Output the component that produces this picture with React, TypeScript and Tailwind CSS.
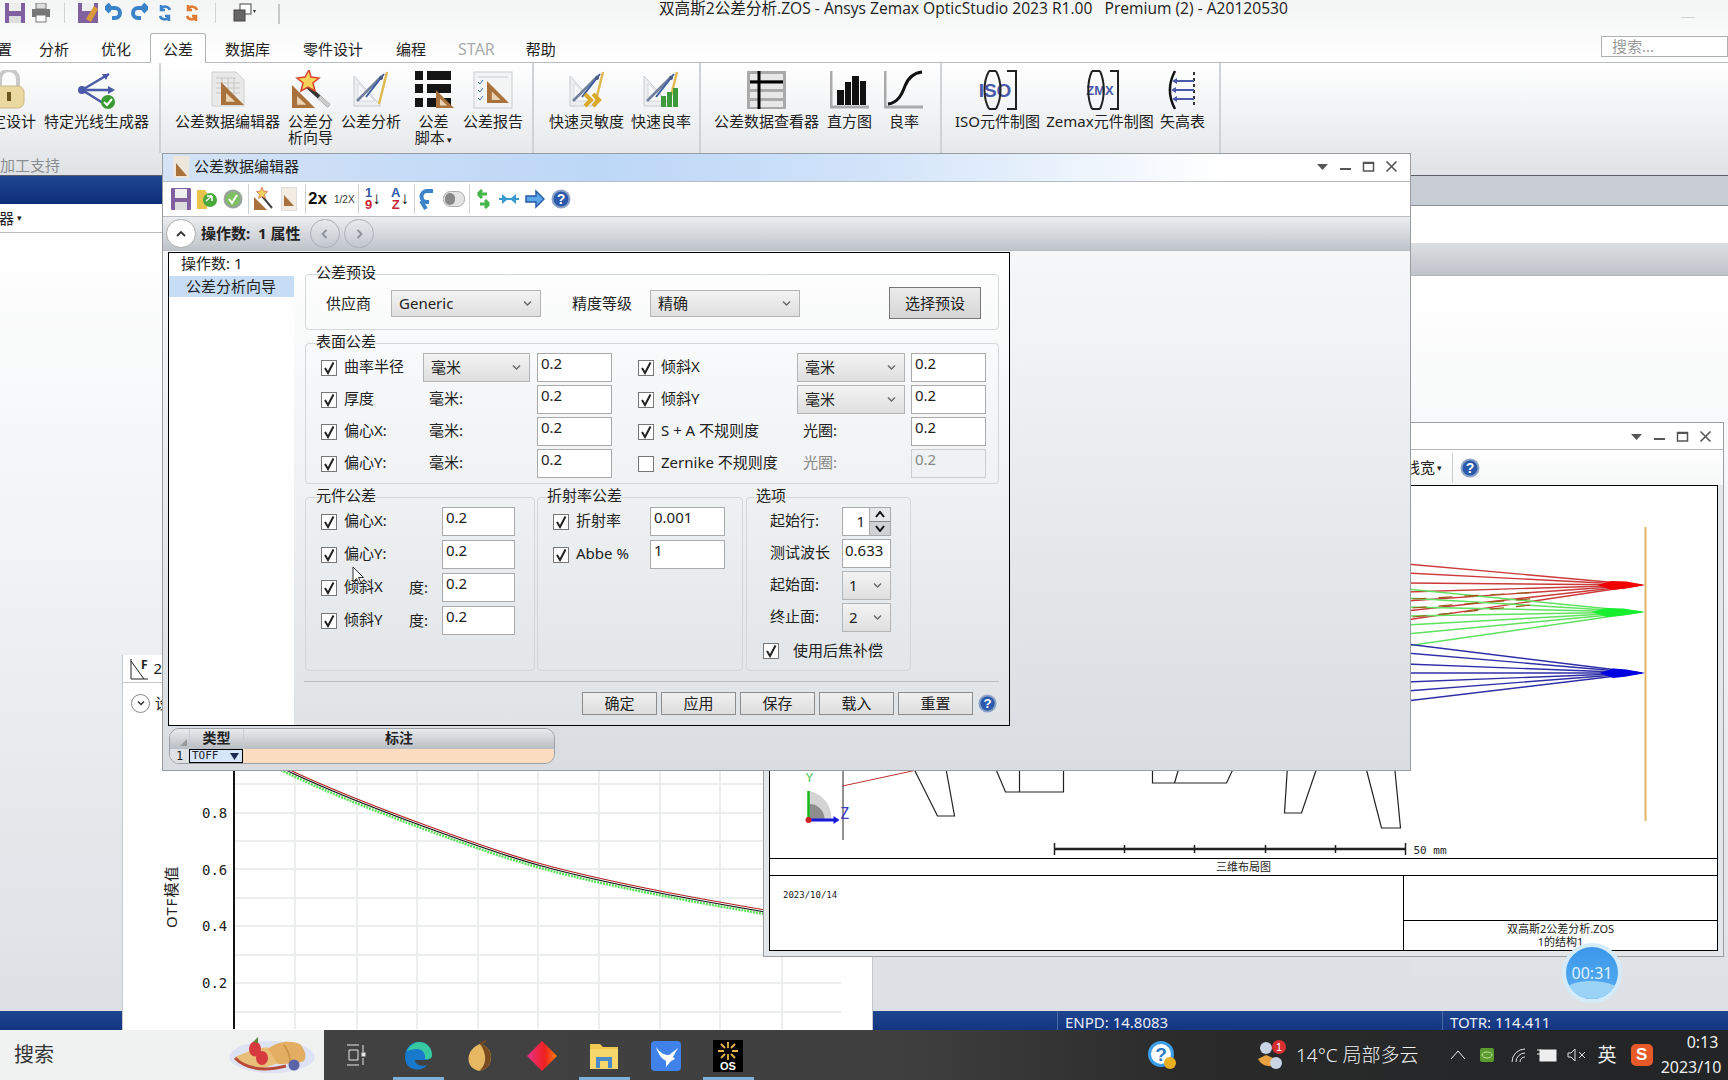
import React from "react";

const Tri = ({ x, y, s, o }: { x: number; y: number; s: number; o?: string }) => (
  <g>
    <path d={`M${x} ${y}L${x + s} ${y + s}H${x}Z`} fill={o ?? "#a9713c"} />
    <path d={`M${x + s * 0.22} ${y + s * 0.48}L${x + s * 0.62} ${y + s * 0.86}H${x + s * 0.22}Z`} fill="#e8d3b4" />
  </g>
);
const Sv = ({ w = 40, h = 40, vb = "0 0 40 40", children }: { w?: number; h?: number; vb?: string; children: React.ReactNode }) => (
  <svg width={w} height={h} viewBox={vb} className="shrink-0">{children}</svg>
);
const Compass = () => (
  <g>
    <path d="M3 6L30 36H3Z" fill="#eceef0" stroke="#c8cbd0" />
    <path d="M7 13L24 31H7Z" fill="#f8f9f9" stroke="#d4d6da" />
    <path d="M6 31L31 6" stroke="#6f7f9c" strokeWidth="2.500" />
    <path d="M15 27L33 4" stroke="#3d5fa0" strokeWidth="2" />
    <path d="M28 34L36 2" stroke="#e0b850" strokeWidth="2.500" />
    <circle cx="30" cy="8" r="2" fill="#4a5a80" />
  </g>
);
const icons: Record<string, React.ReactNode> = {
  lock: (
    <Sv>
      <path d="M6 17V9a9 9 0 0 1 18 0v8" fill="none" stroke="#c9c9c9" strokeWidth="4" />
      <rect x="0" y="16" width="30" height="22" rx="6" fill="#e9d9a0" stroke="#c9b884" />
      <rect x="13" y="22" width="4" height="9" fill="#6b5520" />
    </Sv>
  ),
  gen: (
    <Sv>
      <circle cx="5" cy="20" r="4" fill="#4a5aa8" />
      <path d="M5 20L32 4M5 20H36M5 20L26 33" stroke="#4a5aa8" strokeWidth="2.500" />
      <path d="M32 4l-7 0 4 6zM38 20l-7-4v8z" fill="#4a5aa8" />
      <circle cx="31" cy="32" r="7" fill="#3a9a32" />
      <path d="M27 32l3 3 5-6" stroke="#fff" strokeWidth="2" fill="none" />
    </Sv>
  ),
  sheet: (
    <Sv>
      <path d="M4 2H28L36 10V36H4Z" fill="#e8e9e8" stroke="#cfcfcf" />
      <path d="M8 8H28M8 13H32M8 18H32M8 23H32M14 8V30M20 8V30M26 8V30" stroke="#c8c8c4" />
      <Tri x={13} y={12} s={23} />
    </Sv>
  ),
  wand: (
    <Sv>
      <path d="M16 16L38 36" stroke="#333" strokeWidth="4" />
      <path d="M38 36L28 27" stroke="#ccc" strokeWidth="4" />
      <path d="M18 0l2 7 8 1-6 5 2 8-7-4-7 4 2-8-6-5 8-1z" fill="#f7d35a" stroke="#d4452e" strokeWidth="1.500" />
      <Tri x={1} y={15} s={23} />
    </Sv>
  ),
  comp: <Sv><Compass /></Sv>,
  script: (
    <Sv>
      <g fill="#151515">
        <rect x="1" y="1" width="8" height="9" /><rect x="13" y="1" width="24" height="9" />
        <rect x="1" y="14" width="8" height="9" /><rect x="13" y="14" width="24" height="9" />
        <rect x="1" y="28" width="8" height="9" /><rect x="13" y="28" width="24" height="9" />
      </g>
      <Tri x={22} y={20} s={18} />
    </Sv>
  ),
  report: (
    <Sv>
      <rect x="1" y="2" width="38" height="36" fill="#f3f5f5" stroke="#c9ccd0" />
      <path d="M5 7H35" stroke="#c9ccd0" />
      <path d="M5 12l2 2 3-4M5 20l2 2 3-4M5 28l2 2 3-4" stroke="#4d7fc0" fill="none" />
      <Tri x={14} y={11} s={22} />
    </Sv>
  ),
  sens: (
    <Sv>
      <Compass />
      <path d="M18 24l6 6-6 6M26 24l6 6-6 6" stroke="#d9a92a" strokeWidth="4" fill="none" />
    </Sv>
  ),
  yield: (
    <Sv>
      <Compass />
      <rect x="20" y="26" width="5" height="11" fill="#3d9a3a" />
      <rect x="26" y="22" width="5" height="15" fill="#3d9a3a" />
      <rect x="32" y="18" width="5" height="19" fill="#3d9a3a" />
    </Sv>
  ),
  view: (
    <Sv>
      <rect x="0" y="1" width="39" height="38" fill="#a9aaa9" />
      <g fill="#e6e7e6">
        <rect x="3" y="4" width="33" height="6" /><rect x="3" y="13" width="33" height="6" />
        <rect x="3" y="22" width="33" height="6" /><rect x="3" y="31" width="33" height="6" />
      </g>
      <path d="M12 1V39" stroke="#000" strokeWidth="3" />
      <path d="M3 12H36" stroke="#000" strokeWidth="3" />
    </Sv>
  ),
  hist: (
    <Sv>
      <path d="M1 1V37H39" stroke="#aaa" strokeWidth="3" fill="none" />
      <g fill="#111">
        <rect x="7" y="20" width="7" height="15" /><rect x="15" y="12" width="6" height="23" />
        <rect x="22" y="6" width="7" height="29" /><rect x="30" y="11" width="6" height="24" />
      </g>
    </Sv>
  ),
  curve: (
    <Sv>
      <path d="M1 1V37H39" stroke="#aaa" strokeWidth="3" fill="none" />
      <path d="M4 34C14 33 18 24 21 16S30 3 38 2" stroke="#111" strokeWidth="3" fill="none" />
    </Sv>
  ),
  iso: (
    <Sv w={40} h={40}>
      <text x="17" y="27" textAnchor="middle" fontSize="19" fontWeight="700" fill="#4a58a8" fontFamily="Liberation Sans">ISO</text>
      <g fill="none" stroke="#222" strokeWidth="2">
        <path d="M11 1C5 12 5 28 11 39M18 1C24 12 24 28 18 39M11 1H18M11 39H18" />
        <path d="M29 1H38V39H29" />
      </g>
    </Sv>
  ),
  zmx: (
    <Sv w={40} h={40}>
      <text x="20" y="25" textAnchor="middle" fontSize="13" fontWeight="700" fill="#4a58a8" fontFamily="Liberation Sans">ZMX</text>
      <g fill="none" stroke="#222" strokeWidth="2">
        <path d="M12 1C7 12 7 28 12 39M20 1C25 12 25 28 20 39M12 1H20M12 39H20" />
        <path d="M30 1H38V39H30" />
      </g>
    </Sv>
  ),
  sag: (
    <Sv w={30} h={40} vb="0 0 30 40">
      <path d="M7 1C0 14 0 26 7 39" stroke="#111" strokeWidth="2.500" fill="none" />
      <path d="M26 2V38" stroke="#333" strokeWidth="2" strokeDasharray="3 3" />
      <path d="M6 11H26M5 20H26M6 29H26" stroke="#4a5aa8" strokeWidth="2" />
      <path d="M4 11l5-3v6zM3 20l5-3v6zM4 29l5-3v6z" fill="#4a5aa8" />
    </Sv>
  ),
};

const Item = ({ w, icon, label }: { w: number; icon: string; label: React.ReactNode }) => (
  <div className="flex flex-col items-center shrink-0 pt-[7px]" style={{ width: w }}>
    <div className="h-10 flex justify-center">{icons[icon]}</div>
    <div className="mt-[3px] text-[15px] leading-4 text-center whitespace-nowrap text-[#222]">{label}</div>
  </div>
);

const Group = ({ w, pl, gap, children }: { w: number; pl: number; gap: number; children: React.ReactNode }) => (
  <div className="flex h-[90px] shrink-0 border-r-2 border-[#cfd3d6]" style={{ width: w, paddingLeft: pl, columnGap: gap }}>{children}</div>
);

const Help = ({ s = 20 }: { s?: number }) => (
  <svg width={s} height={s} viewBox="0 0 20 20" className="shrink-0">
    <circle cx="10" cy="10" r="9.500" fill="#8aa2c8" />
    <circle cx="10" cy="10" r="7.500" fill="#2b58aa" />
    <text x="10" y="15" textAnchor="middle" fontSize="14" fontWeight="700" fill="#fff" fontFamily="Liberation Sans">?</text>
  </svg>
);

const WinBtns = () => (
  <div className="flex items-center gap-[10px] text-[#555]">
    <svg width="13" height="13" viewBox="0 0 13 13"><path d="M1 4H12L6.500 10Z" fill="#555" /></svg>
    <svg width="13" height="13" viewBox="0 0 13 13"><path d="M1 9H12" stroke="#555" strokeWidth="2" /></svg>
    <svg width="13" height="13" viewBox="0 0 13 13"><rect x="1.500" y="2.500" width="10" height="8.500" fill="none" stroke="#555" strokeWidth="1.500" /><path d="M1.500 3H11.500" stroke="#555" strokeWidth="2" /></svg>
    <svg width="13" height="13" viewBox="0 0 13 13"><path d="M1.500 1.500L11.500 11.500M11.500 1.500L1.500 11.500" stroke="#555" strokeWidth="1.600" /></svg>
  </div>
);

const Check = ({ on = true }: { on?: boolean }) => (
  <span className="w-4 h-4 border border-[#777] bg-white flex items-center justify-center shrink-0">
    {on && <svg width="14" height="14" viewBox="0 0 14 14"><path d="M3 7L6 12L11.500 1.500" stroke="#222" strokeWidth="2" fill="none" /></svg>}
  </span>
);
const Chev = () => (
  <svg width="9" height="7" viewBox="0 0 9 7" className="shrink-0"><path d="M1 1.500L4.500 5L8 1.500" stroke="#666" strokeWidth="1.400" fill="none" /></svg>
);
const Combo = ({ v, w, h = 29, pl = 7 }: { v: string; w?: number | string; h?: number; pl?: number }) => (
  <div className="flex items-center justify-between border border-[#b4b4b4] bg-linear-to-b from-[#f3f3f3] to-[#dedfde] pr-[8px] text-[15px] text-[#222]" style={{ width: w, height: h, paddingLeft: pl }}>
    <span>{v}</span><Chev />
  </div>
);
const Inp = ({ v, dis, w = 75 }: { v: string; dis?: boolean; w?: number }) => (
  <div className={`h-[29px] border pl-[3px] text-[15px] leading-[19px] ${dis ? "border-[#ccc] bg-[#eff1f2] text-[#888]" : "border-[#aaa] bg-white text-[#222]"}`} style={{ width: w }}>{v}</div>
);
const CL = ({ label, on = true, w }: { label: string; on?: boolean; w?: number }) => (
  <div className="flex items-center gap-[7px] text-[15px] text-[#222] whitespace-nowrap" style={{ width: w }}>
    <Check on={on} /><span className="pb-[2px]">{label}</span>
  </div>
);
const Unit = ({ t, dim }: { t: string; dim?: boolean }) => (
  <div className={`flex items-center pl-[6px] pb-[2px] text-[15px] ${dim ? "text-[#888]" : "text-[#222]"}`}>{t}</div>
);
const Box = ({ title, h, w, cls, children, lx = 9 }: { title: string; h: number; w?: number; cls?: string; children: React.ReactNode; lx?: number }) => (
  <div className={`relative rounded-[4px] border border-[#d3d7da] shrink-0 ${cls ?? ""}`} style={{ height: h, width: w }}>
    <span className="absolute -top-[13px] px-[1px] text-[15px] leading-[20px] text-[#222]" style={{ left: lx }}>{title}</span>
    {children}
  </div>
);
const Btn = ({ t }: { t: string }) => (
  <div className="w-[75px] h-[23px] flex items-center justify-center border border-[#8c8c8c] bg-linear-to-b from-[#f0f0f0] to-[#dcdddc] text-[15px] text-[#222]">{t}</div>
);

const Sep = () => <div className="w-px h-[30px] bg-[#cfd2d4] shrink-0" />;

const DialogToolbar = () => (
  <div className="h-[34px] bg-white flex items-center pl-[8px] shrink-0">
    <div className="flex items-center gap-[6px]">
      <svg width="20" height="22" viewBox="0 0 20 22"><rect width="20" height="22" rx="1" fill="#80609f" /><rect x="4" y="1" width="12" height="9" fill="#eee" /><rect x="4" y="14" width="12" height="8" fill="#ddd" /></svg>
      <svg width="20" height="22" viewBox="0 0 20 22"><path d="M0 2H8L10 5V21H0Z" fill="#e8c44c" /><circle cx="13" cy="12" r="7" fill="#4aa83c" /><path d="M9 13L15 8M15 8V13M15 8H10" stroke="#fff" strokeWidth="1.500" fill="none" /></svg>
      <svg width="20" height="22" viewBox="0 0 20 22"><circle cx="10" cy="11" r="9.500" fill="#9aa49a" /><circle cx="10" cy="11" r="7" fill="#7cc060" /><path d="M6 11l3 4 5-8" stroke="#fff" strokeWidth="2" fill="none" /></svg>
    </div>
    <div className="ml-[5px] mr-[4px]"><Sep /></div>
    <svg width="20" height="24" viewBox="0 0 20 24"><path d="M9 9L19 21" stroke="#444" strokeWidth="2" /><path d="M9 0l1.500 4 4 .5-3 3 1 4-3.500-2-3.500 2 1-4-3-3 4-.5z" fill="#f0d060" stroke="#c64" strokeWidth=".7" /><path d="M1 10L14 23H1Z" fill="#a9713c" /></svg>
    <svg className="ml-[8px]" width="16" height="24" viewBox="0 0 16 24"><rect x=".5" y=".5" width="15" height="23" fill="#f2ece2" stroke="#ddd" /><path d="M3 8L13 19H3Z" fill="#a9713c" /></svg>
    <div className="ml-[8px] mr-[2px]"><Sep /></div>
    <span className="text-[17px] font-bold font-['Liberation_Sans'] w-[26px] text-[#111]">2x</span>
    <span className="text-[10px] font-['Liberation_Sans'] w-[24px] text-[#333]">1/2X</span>
    <Sep />
    <span className="ml-[6px] flex items-center w-[22px] font-['Liberation_Sans'] text-[13px] font-bold leading-[12px]"><span className="flex flex-col text-center"><span className="text-[#345ba8]">1</span><span className="text-[#c23]">9</span></span><span className="text-[17px]">↓</span></span>
    <span className="ml-[4px] flex items-center w-[22px] font-['Liberation_Sans'] text-[13px] font-bold leading-[12px]"><span className="flex flex-col text-center"><span className="text-[#345ba8]">A</span><span className="text-[#c23]">Z</span></span><span className="text-[17px]">↓</span></span>
    <div className="ml-[1px] mr-[4px]"><Sep /></div>
    <svg width="15" height="24" viewBox="0 0 15 24"><path d="M14 4H8a5 5 0 0 0 0 11H10M7 22L2 14" stroke="#3a83c8" strokeWidth="4" fill="none" /></svg>
    <svg className="ml-[9px]" width="22" height="16" viewBox="0 0 22 16"><rect x=".5" y=".5" width="21" height="15" rx="7" fill="#e3e3e3" stroke="#aaa" /><rect x="2" y="2" width="10" height="12" rx="5" fill="#888" /></svg>
    <div className="ml-[4px] mr-[6px]"><Sep /></div>
    <svg width="15" height="24" viewBox="0 0 15 24"><path d="M2 7H11M2 7L6 3M2 7L6 11" stroke="#45b74a" strokeWidth="3" fill="none" /><path d="M13 17H4M13 17L9 13M13 17L9 21" stroke="#45b74a" strokeWidth="3" fill="none" /></svg>
    <svg className="ml-[8px]" width="20" height="12" viewBox="0 0 20 12"><path d="M0 6H20" stroke="#3a9ad0" strokeWidth="2" /><path d="M9 6L3 1V11ZM11 6L17 1V11Z" fill="#3a9ad0" /></svg>
    <svg className="ml-[6px]" width="20" height="20" viewBox="0 0 20 20"><path d="M1 7H11V2L19 10L11 18V13H1Z" fill="#5aa8e8" stroke="#2a5aa8" strokeWidth="1.500" /></svg>
    <div className="ml-[6px]"><Help s={20} /></div>
  </div>
);

const CircleBtn = ({ d, on }: { d: string; on?: boolean }) => (
  <div className={`w-[30px] h-[29px] rounded-full border flex items-center justify-center ${on ? "bg-white border-[#aaa]" : "border-[#aab0b6]"}`}>
    <svg width="12" height="12" viewBox="0 0 12 12"><path d={d} stroke={on ? "#333" : "#8d9298"} strokeWidth="1.800" fill="none" /></svg>
  </div>
);

const Dialog = () => (
  <div className="absolute left-[162px] top-[153px] w-[1249px] h-[618px] z-20 flex flex-col border border-[#9a9da0] bg-linear-to-b from-[#fbfcfc] to-[#d9dde1]">
    <div className="h-[28px] shrink-0 flex items-center pl-[10px] pr-[12px] pb-[2px] border-b border-[#b8bcc0] bg-[linear-gradient(90deg,#d4e3f6_0%,#bdd7f7_35%,#cfe2f9_55%,#ffffff_85%)]">
      <svg width="16" height="22" viewBox="0 0 16 22" className="shrink-0"><rect width="16" height="22" fill="#eee6da" /><path d="M3 7L14 20H3Z" fill="#a9713c" /></svg>
      <span className="ml-[5px] text-[15px] text-[#222] flex-1">公差数据编辑器</span>
      <WinBtns />
    </div>
    <DialogToolbar />
    <div className="h-[35px] shrink-0 flex items-center pl-[3px] border-y border-[#b9bdc1] bg-linear-to-b from-[#eceef0] to-[#bfc4ca]">
      <CircleBtn on d="M2 8L6 4L10 8" />
      <span className="ml-[5px] w-[109px] text-[15px] font-bold text-[#222] whitespace-nowrap">操作数:&nbsp; 1 属性</span>
      <CircleBtn d="M7.500 2L3.500 6L7.500 10" />
      <div className="ml-[4px]"><CircleBtn d="M4.500 2L8.500 6L4.500 10" /></div>
    </div>
    <div className="ml-[5px] mt-[1px] w-[842px] h-[474px] flex border border-black shrink-0 bg-white">
      <div className="w-[125px] bg-white shrink-0">
        <div className="h-[23px] pl-[12px] text-[15px] leading-[21px] text-[#222]">操作数: 1</div>
        <div className="h-[21px] bg-[#c7dcf5] pl-[17px] text-[15px] leading-[20px] text-[#222]">公差分析向导</div>
      </div>
      <div className="flex-1 bg-linear-to-b from-white to-[#dfe3e6] pl-[11px] pr-[10px] pt-[21px]">
        <Box title="公差预设" h={56} cls="flex items-center pt-[2px]">
          <span className="ml-[20px] w-[65px] text-[15px] text-[#222]">供应商</span>
          <Combo v="Generic" w={150} h={27} />
          <span className="ml-[31px] w-[78px] text-[15px] text-[#222]">精度等级</span>
          <Combo v="精确" w={150} h={27} />
          <div className="ml-[89px] w-[92px] h-[32px] flex items-center justify-center border border-[#777] bg-linear-to-b from-[#ececec] to-[#d4d5d4] text-[15px] text-[#222]">选择预设</div>
        </Box>
        <Box title="表面公差" h={141} cls="mt-[13px] pt-[9px] pl-[15px]">
          <div className="grid grid-cols-[102px_114px_101px_159px_114px_75px] auto-rows-[29px] gap-y-[3px]">
            <CL label="曲率半径" /><div className="w-[107px]"><Combo v="毫米" /></div><Inp v="0.2" />
            <CL label="倾斜X" /><div className="w-[108px]"><Combo v="毫米" /></div><Inp v="0.2" />
            <CL label="厚度" /><Unit t="毫米:" /><Inp v="0.2" />
            <CL label="倾斜Y" /><div className="w-[108px]"><Combo v="毫米" /></div><Inp v="0.2" />
            <CL label="偏心X:" /><Unit t="毫米:" /><Inp v="0.2" />
            <CL label="S + A 不规则度" /><Unit t="光圈:" /><Inp v="0.2" />
            <CL label="偏心Y:" /><Unit t="毫米:" /><Inp v="0.2" />
            <CL label="Zernike 不规则度" on={false} /><Unit t="光圈:" dim /><Inp v="0.2" dis />
          </div>
        </Box>
        <div className="mt-[13px] flex">
          <Box title="元件公差" h={174} w={230} cls="pt-[9px] pl-[15px]">
            <div className="grid grid-cols-[88px_33px_73px] auto-rows-[29px] gap-y-[4px]">
              <CL label="偏心X:" /><span /><Inp v="0.2" w={73} />
              <CL label="偏心Y:" /><span /><Inp v="0.2" w={73} />
              <CL label="倾斜X" /><span className="flex items-center text-[15px] text-[#222]">度:</span><Inp v="0.2" w={73} />
              <CL label="倾斜Y" /><span className="flex items-center text-[15px] text-[#222]">度:</span><Inp v="0.2" w={73} />
            </div>
          </Box>
          <Box title="折射率公差" h={174} w={206} cls="ml-[2px] pt-[9px] pl-[15px]" lx={8}>
            <div className="grid grid-cols-[97px_75px] auto-rows-[29px] gap-y-[4px]">
              <CL label="折射率" /><Inp v="0.001" />
              <CL label="Abbe %" /><Inp v="1" />
            </div>
          </Box>
          <Box title="选项" h={174} w={165} cls="ml-[3px] pt-[9px] pl-[23px]" lx={8}>
            <div className="grid grid-cols-[72px_49px] auto-rows-[29px] gap-y-[3px] text-[15px] text-[#222]">
              <span className="flex items-center pb-[2px]">起始行:</span>
              <div className="flex border border-[#aaa] bg-white">
                <span className="flex-1 text-right pr-[4px] leading-[27px]">1</span>
                <div className="w-[21px] flex flex-col border-l border-[#aaa]">
                  <span className="flex-1 flex items-center justify-center bg-[#e6e7e8] border-b border-[#888]"><svg width="10" height="7" viewBox="0 0 10 7"><path d="M1 6L5 1L9 6" stroke="#111" strokeWidth="2" fill="none" /></svg></span>
                  <span className="flex-1 flex items-center justify-center bg-[#cfd1d3]"><svg width="10" height="7" viewBox="0 0 10 7"><path d="M1 1L5 6L9 1" stroke="#111" strokeWidth="2" fill="none" /></svg></span>
                </div>
              </div>
              <span className="flex items-center whitespace-nowrap pb-[2px]">测试波长</span>
              <div className="h-[29px] border border-[#aaa] bg-white pl-[2px] leading-[20px]">0.633</div>
              <span className="flex items-center pb-[2px]">起始面:</span>
              <Combo v="1" h={29} pl={6} />
              <span className="flex items-center pb-[2px]">终止面:</span>
              <Combo v="2" h={29} pl={6} />
            </div>
            <div className="mt-[7px] -ml-[7px] flex items-center gap-[14px] text-[15px] text-[#222]"><Check /><span className="pb-[2px]">使用后焦补偿</span></div>
          </Box>
        </div>
        <div className="mt-[10px] -ml-[1px] h-px bg-[#b9bec3]" />
        <div className="mt-[10px] flex items-center justify-end gap-[4px] pr-[2px]">
          <Btn t="确定" /><Btn t="应用" /><Btn t="保存" /><Btn t="载入" /><Btn t="重置" />
          <div className="ml-[1px]"><Help s={19} /></div>
        </div>
      </div>
    </div>
    <div className="ml-[6px] mt-[2px] w-[386px] h-[36px] rounded-[10px] overflow-hidden border border-[#9aa0a6] shrink-0 flex flex-col">
      <div className="h-[22px] flex bg-linear-to-b from-[#e9ebed] to-[#b9bec4] text-[14px] font-bold text-[#222] leading-[17px]">
        <span className="w-[19px] relative"><svg className="absolute right-[2px] bottom-[3px]" width="7" height="7" viewBox="0 0 7 7"><path d="M7 0V7H0Z" fill="#999" /></svg></span>
        <span className="w-[54px] text-center border-l border-[#c8ccd0]">类型</span>
        <span className="flex-1 text-center border-l border-[#c8ccd0]">标注</span>
      </div>
      <div className="flex-1 flex bg-[#fbdcc0]">
        <span className="w-[19px] bg-[#dfe2e5] text-center text-[12px] leading-[14px] text-[#222] font-['DejaVu_Sans_Mono']">1</span>
        <span className="w-[54px] flex items-center justify-between border border-black bg-[#d6e6fb] pl-[2px] pr-[3px] text-[11px] leading-[12px] text-[#222] font-['DejaVu_Sans_Mono']">TOFF<svg width="9" height="7" viewBox="0 0 9 7"><path d="M0 0H9L4.500 7Z" fill="#1a2a50" /></svg></span>
      </div>
    </div>
    <svg className="absolute left-[189px] top-[412px] z-30" width="13" height="20" viewBox="0 0 13 20"><path d="M1 1V16L4.500 12.500L7 18L9 17L6.500 11.500H11.500Z" fill="#fff" stroke="#333" /></svg>
  </div>
);

const red = [563, 572, 582, 591, 600, 610, 619];
const green = [588, 597, 606, 615, 624, 633, 645];
const blue = [643, 652, 663, 672, 681, 690, 700];
const Rays = () => (
  <svg viewBox="769 485 946 372" className="w-full h-full block">
    {red.map((y) => <line key={y} x1="1405" y1={y} x2="1640" y2="584" stroke="#cc3a3a" strokeWidth="1.300" />)}
    {green.map((y) => <line key={y} x1="1405" y1={y} x2="1640" y2="611" stroke="#5fe25f" strokeWidth="1.500" />)}
    {[597, 606, 615].map((y) => <line key={y} x1="1411" y1={y + 1} x2="1540" y2={y - 12 + (615 - y) / 3} stroke="#9a5a14" strokeWidth="1.200" strokeDasharray="14 12" />)}
    {blue.map((y) => <line key={y} x1="1405" y1={y} x2="1640" y2="672" stroke="#2f2fa8" strokeWidth="1.300" />)}
    <path d="M1596 584L1610 580L1625 580.500L1644 584L1625 587.500L1610 589Z" fill="#f20000" />
    <path d="M1590 611L1605 607L1622 607.500L1644 611L1622 614.500L1605 616Z" fill="#18ee30" />
    <path d="M1598 672L1612 667.500L1625 668.500L1644 672L1625 675.500L1612 677Z" fill="#0000e0" />
    <line x1="1644" y1="526" x2="1644" y2="820" stroke="#e0b868" strokeWidth="2" />
    <line x1="841.500" y1="760" x2="841.500" y2="839" stroke="#222" />
    <line x1="841" y1="785" x2="920" y2="768" stroke="#c03030" />
    <g fill="none" stroke="#222" strokeWidth="1.200">
      <path d="M911 765L936 815H953L944 765" />
      <path d="M993 765L1004 791H1062V765M1018 765V791" />
      <path d="M1151 765V782H1225L1233 765M1178 765L1173 782" />
      <path d="M1316 765L1300 812H1283L1286 765" />
      <path d="M1364 765L1380 827H1399L1393 765" />
    </g>
    <path d="M808 790A28 28 0 0 1 830 818H808Z" fill="#d4d4d4" />
    <path d="M808 803A15 15 0 0 1 823 818H808Z" fill="#8e8e8e" />
    <path d="M807 818V790" stroke="#14b814" strokeWidth="2.500" />
    <path d="M807 819H834" stroke="#1818d8" strokeWidth="3" />
    <path d="M838 819l-6-4v8z" fill="#1818d8" />
    <circle cx="807" cy="819" r="3" fill="#d02020" />
    <text x="808" y="781" textAnchor="middle" fontSize="13" fill="#58c858" fontFamily="DejaVu Sans Mono">Y</text>
    <text x="843" y="818" textAnchor="middle" fontSize="15" fill="#3a3ac0" fontFamily="DejaVu Sans Mono">Z</text>
    <path d="M1053 848H1404" stroke="#222" strokeWidth="2.500" />
    <path d="M1053 842V854M1123 844V852M1193 844V852M1264 844V852M1334 844V852M1404 842V854" stroke="#222" strokeWidth="1.500" />
    <text x="1412" y="853" fontSize="11" fill="#222" fontFamily="DejaVu Sans Mono">50 mm</text>
  </svg>
);

const LayoutWin = () => (
  <div className="absolute left-[763px] top-[422px] w-[961px] h-[535px] z-10 flex flex-col border border-[#9a9da0] bg-[#e4e7ea]">
    <div className="h-[27px] shrink-0 flex items-center justify-end pr-[11px] bg-white border-b border-[#b4b7ba]"><WinBtns /></div>
    <div className="h-[35px] shrink-0 flex items-center pl-[641px] bg-linear-to-b from-white to-[#f6f7f7]">
      <span className="text-[15px] w-[37px] text-[#222] flex items-center gap-[1px] whitespace-nowrap">线宽<span className="text-[9px] ml-[1px]">▾</span></span>
      <div className="ml-[10px] w-px h-[30px] bg-[#c9ccce]" />
      <div className="ml-[7px]"><Help s={20} /></div>
    </div>
    <div className="mx-[5px] flex-1 border border-black bg-white flex flex-col text-[#222]">
      <div className="h-[372px] shrink-0"><Rays /></div>
      <div className="h-[18px] shrink-0 border-y border-black flex items-center justify-center text-[11px]">三维布局图</div>
      <div className="flex-1 flex">
        <div className="w-[633px] pl-[13px] pt-[13px] text-[9px] font-['DejaVu_Sans_Mono']">2023/10/14</div>
        <div className="flex-1 flex flex-col border-l border-black">
          <div className="h-[45px] border-b border-black" />
          <div className="flex-1 text-center text-[11px] leading-[13px] pt-[1px]">双高斯2公差分析.ZOS<br />1的结构1</div>
        </div>
      </div>
    </div>
    <div className="h-[5px] shrink-0" />
  </div>
);

const Otf = () => {
  const hs = [784, 813, 841, 869, 898, 926, 955, 983, 1012];
  const vs = [294, 356, 416, 477, 537, 598, 659, 719, 781];
  const C = "M262 758C272 763 281 767 291 772C332.700 791.600 374.300 807.600 416 823C456.300 837.900 496.700 852.700 537 864C577.700 875.400 618.300 883.900 659 892C693.700 898.900 728.300 904.800 770 912";
  return (
    <div className="absolute left-[122px] top-[655px] w-[751px] h-[375px] z-0 bg-white border-x border-[#c5c9ce] flex flex-col">
      <div className="h-[28px] shrink-0 flex items-center pl-[6px] border-b border-[#c5c9ce] text-[15px] text-[#222]">
        <svg width="20" height="24" viewBox="0 0 20 24"><path d="M2 2V22H19" stroke="#222" fill="none" /><path d="M2 4L15 22" stroke="#222" fill="none" /></svg>
        <span className="-ml-[8px] -mt-[8px] text-[12px] font-bold">F</span>
        <span className="ml-[6px]">2</span>
      </div>
      <div className="h-[40px] shrink-0 flex items-center pl-[8px] text-[15px] text-[#222]">
        <span className="w-[19px] h-[19px] rounded-full border border-[#888] flex items-center justify-center"><svg width="10" height="10" viewBox="0 0 10 10"><path d="M2 3.500L5 6.500L8 3.500" stroke="#333" strokeWidth="1.500" fill="none" /></svg></span>
        <span className="ml-[5px]">设</span>
      </div>
      <svg viewBox="122 723 750 306" className="w-[750px] h-[306px] block">
        {hs.map((y) => <line key={y} x1="233" y1={y} x2="840" y2={y} stroke="#eceded" strokeWidth="2" />)}
        {vs.map((x) => <line key={x} x1={x} y1="760" x2={x} y2="1030" stroke="#eceded" strokeWidth="2" />)}
        <line x1="233" y1="760" x2="233" y2="1030" stroke="#111" strokeWidth="2" />
        <path d={C} fill="none" stroke="#56e056" strokeWidth="2.500" strokeDasharray="2 1" transform="translate(-1 3)" />
        <path d={C} fill="none" stroke="#b02020" strokeWidth="1.200" transform="translate(0 -1)" />
        <path d={C} fill="none" stroke="#111" strokeWidth="1.200" transform="translate(0 1)" />
        {[["0.8", 818], ["0.6", 875], ["0.4", 931], ["0.2", 988]].map(([t, y]) => (
          <text key={t} x="201" y={y} fontSize="14" fill="#222" fontFamily="DejaVu Sans Mono">{t}</text>
        ))}
        <text x="0" y="0" fontSize="15" fill="#222" transform="translate(176 928) rotate(-90)" letterSpacing="1">OTF模值</text>
      </svg>
    </div>
  );
};

const QA = () => (
  <div className="flex items-start pt-[3px] w-[659px] shrink-0 pl-[5px]">
    <svg width="20" height="20" viewBox="0 0 20 20"><rect width="20" height="20" fill="#80609f" /><rect x="4" y="0" width="12" height="8" fill="#eee" /><rect x="4" y="13" width="12" height="7" fill="#ddd" /></svg>
    <svg className="ml-[6px]" width="20" height="20" viewBox="0 0 20 20"><rect x="5" y="0" width="10" height="6" fill="#ddd" stroke="#777" /><rect x="1" y="6" width="18" height="8" fill="#777" /><rect x="5" y="12" width="10" height="7" fill="#fff" stroke="#777" /></svg>
    <div className="ml-[13px] w-px h-[20px] bg-[#d0d2d4]" />
    <svg className="ml-[13px]" width="20" height="20" viewBox="0 0 20 20"><rect width="20" height="20" fill="#80609f" /><rect x="4" y="0" width="12" height="8" fill="#eee" /><path d="M8 16L16 3L20 6L13 19Z" fill="#d99a3a" /></svg>
    <svg className="ml-[7px]" width="17" height="20" viewBox="0 0 17 20"><path d="M3 5H10a5 5 0 0 1 0 10H7M5 1L1 5L5 9" stroke="#3a83c8" strokeWidth="4" fill="none" /></svg>
    <svg className="ml-[9px]" width="17" height="20" viewBox="0 0 17 20"><path d="M14 5H7a5 5 0 0 0 0 10H10M12 1L16 5L12 9" stroke="#3a83c8" strokeWidth="4" fill="none" /></svg>
    <svg className="ml-[10px]" width="14" height="20" viewBox="0 0 14 20"><path d="M12 7A5 5 0 0 0 3 6M2 13A5 5 0 0 0 11 14M3 2V7H7M11 18V13H7" stroke="#3a83c8" strokeWidth="2.500" fill="none" /></svg>
    <svg className="ml-[13px]" width="15" height="20" viewBox="0 0 15 20"><path d="M12 7A5 5 0 0 0 3 6M2 13A5 5 0 0 0 11 14M3 2V7H7M11 18V13H7" stroke="#e07a30" strokeWidth="2.500" fill="none" /></svg>
    <div className="ml-[15px] w-px h-[20px] bg-[#d0d2d4]" />
    <svg className="ml-[16px]" width="24" height="20" viewBox="0 0 24 20"><rect x="8" y="1" width="11" height="10" fill="#fff" stroke="#444" /><rect x="2" y="7" width="11" height="11" fill="#666" stroke="#444" /><path d="M21 7H24L22.500 10Z" fill="#333" /></svg>
    <div className="ml-[22px] w-[2px] h-[20px] bg-[#c6c8ca] mt-[1px]" />
  </div>
);

const Top = () => (
  <div className="shrink-0 h-[63px] bg-linear-to-b from-[#f3f4f4] to-white border-b border-[#b9bcbf] flex flex-col">
    <div className="h-[34px] flex">
      <QA />
      <span className="shrink-0 text-[15.6px] leading-[16px] text-[#222] whitespace-nowrap font-['Open_Sans','Noto_Sans_CJK_SC',sans-serif]">双高斯2公差分析.ZOS - Ansys Zemax OpticStudio 2023 R1.00&nbsp;&nbsp; Premium (2) - A20120530</span>
      <div className="ml-auto mr-[33px] mt-[17px] w-[14px] h-px bg-[#d4d4d4]" />
    </div>
    <div className="h-[29px] flex text-[15px] text-[#222] leading-[32px]">
      <span className="w-[12px] overflow-hidden shrink-0 flex justify-end"><span className="shrink-0">置</span></span>
      <span className="ml-[27px]">分析</span>
      <span className="ml-[32px]">优化</span>
      <span className="ml-[19px] w-[56px] h-[30px] text-center bg-white border-x border-t border-[#b0b4b8] rounded-t-[3px] z-10 leading-[31px]">公差</span>
      <span className="ml-[19px]">数据库</span>
      <span className="ml-[33px]">零件设计</span>
      <span className="ml-[33px]">编程</span>
      <span className="ml-[32px] text-[16px] text-[#a8abae]">STAR</span>
      <span className="ml-[31px]">帮助</span>
      <div className="ml-auto mt-[3px] w-[127px] h-[21px] border border-[#aeb1b4] bg-white pl-[10px] text-[15px] leading-[19px] text-[#9a9a9a]">搜索...</div>
    </div>
  </div>
);

const Ribbon = () => (
  <div className="shrink-0 h-[113px] bg-linear-to-b from-white to-[#e0e3e6] border-b border-[#5a6068] flex flex-col">
    <div className="flex">
      <Group w={161} pl={0} gap={0}>
        <div className="-ml-[9px] flex">
          <Item w={45} icon="lock" label="定设计" />
          <div className="ml-[8px]"><Item w={105} icon="gen" label="特定光线生成器" /></div>
        </div>
      </Group>
      <Group w={373} pl={14} gap={7}>
        <Item w={105} icon="sheet" label="公差数据编辑器" />
        <Item w={47} icon="wand" label={<>公差分<br />析向导</>} />
        <Item w={60} icon="comp" label="公差分析" />
        <div className="ml-[3px]"><Item w={45} icon="script" label={<>公差<br />脚本<span className="text-[9px]"> ▾</span></>} /></div>
        <Item w={60} icon="report" label="公差报告" />
      </Group>
      <Group w={167} pl={15} gap={7}>
        <Item w={75} icon="sens" label="快速灵敏度" />
        <Item w={60} icon="yield" label="快速良率" />
      </Group>
      <Group w={241} pl={13} gap={8}>
        <Item w={105} icon="view" label="公差数据查看器" />
        <Item w={45} icon="hist" label="直方图" />
        <div className="ml-[9px]"><Item w={30} icon="curve" label="良率" /></div>
      </Group>
      <Group w={279} pl={13} gap={6}>
        <Item w={85} icon="iso" label="ISO元件制图" />
        <Item w={108} icon="zmx" label="Zemax元件制图" />
        <Item w={45} icon="sag" label="矢高表" />
      </Group>
    </div>
    <div className="h-[22px] text-[15px] leading-[24px] text-[#8a8d90] whitespace-nowrap">加工支持</div>
  </div>
);

const Work = () => (
  <div className="flex-1 flex min-h-0">
    <div className="w-[163px] shrink-0 flex flex-col">
      <div className="h-[28px] shrink-0 bg-linear-to-b from-[#1f468f] to-[#0e2d78]" />
      <div className="h-[29px] shrink-0 bg-white border-b border-[#b8bcc0] flex items-center justify-end pr-[141px] text-[15px] text-[#222]"><span className="flex items-center whitespace-nowrap">器<span className="text-[9px] ml-[3px]">▾</span></span></div>
      <div className="flex-1 bg-linear-to-b from-white to-[#dde1e5]" />
    </div>
    <div className="flex-1 bg-linear-to-b from-[#eef0f2] to-[#dde1e5]" />
    <div className="w-[317px] shrink-0 flex flex-col">
      <div className="h-[30px] shrink-0 bg-[#c9ced6] border-b border-[#8b9096]" />
      <div className="h-[37px] shrink-0 bg-white" />
      <div className="h-[33px] shrink-0 bg-linear-to-b from-[#dcdfe2] to-[#bfc3c9] border-b border-[#b0b4b8]" />
      <div className="flex-1 bg-linear-to-b from-white to-[#dde1e5]" />
    </div>
  </div>
);

const Status = () => (
  <div className="shrink-0 h-[19px] flex pl-[1057px] bg-linear-to-b from-[#1f468f] to-[#14357f] text-[15px] leading-[22px] text-[#e8eef8] overflow-hidden">
    <span className="w-[385px] pl-[7px] border-l border-[#4a6aa8]">ENPD: 14.8083</span>
    <span className="pl-[7px] border-l border-[#4a6aa8]">TOTR: 114.411</span>
  </div>
);

const Tk = ({ c, u }: { c: React.ReactNode; u?: boolean }) => (
  <div className="w-[62px] h-full flex flex-col items-center justify-between pt-[10px] shrink-0">
    <div className="h-[32px] flex items-center justify-center">{c}</div>
    <div className={`h-[3px] w-[51px] ${u ? "bg-[#7fb0d8]" : ""}`} />
  </div>
);

const Taskbar = () => (
  <div className="shrink-0 h-[50px] flex overflow-hidden">
    <div className="w-[324px] shrink-0 bg-[#f0f1f1] flex items-center justify-between pl-[14px] pr-[8px] text-[20px] text-[#333]">
      <span>搜索</span>
      <svg width="88" height="38" viewBox="0 0 88 38">
        <ellipse cx="44" cy="21" rx="43" ry="16" fill="#dde2f4" />
        <path d="M7 21C20 16 30 10 42 12L54 26L32 33C22 32 12 27 7 21Z" fill="#e8bf78" />
        <path d="M40 13C50 5 62 4 72 8C77 14 79 20 76 25C68 28 58 28 50 28Z" fill="#e3ad62" />
        <path d="M56 9C60 14 62 20 62 27" stroke="#c98f45" strokeWidth="1.500" fill="none" />
        <path d="M7 22C18 33 34 36 58 30" stroke="#b84a3a" strokeWidth="3" fill="none" />
        <ellipse cx="27" cy="13" rx="6" ry="7.500" fill="#d63a3e" /><ellipse cx="34" cy="22" rx="6" ry="7" fill="#d63a3e" />
        <path d="M25 6L30 1L30 7Z" fill="#5a8a3a" />
        <circle cx="66" cy="29" r="5.500" fill="#5a62a8" />
      </svg>
    </div>
    <div className="flex-1 flex items-center bg-[linear-gradient(90deg,#414141_0%,#404040_40%,#2a2a2a_62%,#222426_100%)] text-white">
      <div className="w-[62px] flex justify-center ml-[1px] shrink-0"><svg width="20" height="24" viewBox="0 0 20 24" fill="none" stroke="#e8e8e8"><path d="M1 2H13M3 7H12V17H3ZM1 22H13M17 2V9M17 15V22" /><rect x="16" y="10" width="3" height="3" fill="#e8e8e8" /></svg></div>
      <Tk u c={<svg width="30" height="30" viewBox="0 0 30 30"><path d="M2 16C2 7 8 1 16 1C24 1 29 7 29 14C29 18 25 19 21 19H12C12 23 17 26 24 24C20 29 15 29 11 28C5 27 2 22 2 16Z" fill="#1878cc" /><path d="M4 10C7 4 12 1 16 1C24 1 29 7 29 14C29 18 25 19 22 18C23 12 19 8 14 8C10 8 6 9 4 10Z" fill="#38c8a0" /></svg>} />
      <Tk c={<svg width="30" height="32" viewBox="0 0 30 32"><path d="M15 4C24 6 28 14 25 23C23 28 19 30 14 31C6 29 2 23 4 15C6 9 10 6 15 4Z" fill="#e6b862" /><path d="M15 4C24 6 28 14 25 23C23 28 19 30 14 31C21 26 23 15 15 4Z" fill="#7a4a20" /><path d="M15 4L21 1" stroke="#7a4a20" strokeWidth="2" /></svg>} />
      <Tk c={<svg width="30" height="30" viewBox="0 0 30 30"><defs><linearGradient id="dm" x1="0" x2="1"><stop offset="0" stopColor="#e8308a" /><stop offset="0.6" stopColor="#f02020" /><stop offset="1" stopColor="#f88010" /></linearGradient></defs><path d="M15 0L30 15L15 30L0 15Z" fill="url(#dm)" /></svg>} />
      <Tk u c={<svg width="30" height="28" viewBox="0 0 30 28"><path d="M1 2H11L14 5H29V27H1Z" fill="#f0c850" /><rect x="1" y="7" width="28" height="20" fill="#f7d66c" /><path d="M9 26V17H21V26" stroke="#4a8ac8" strokeWidth="4" fill="none" /></svg>} />
      <Tk c={<svg width="30" height="30" viewBox="0 0 30 30"><rect width="30" height="30" rx="4" fill="#3f82ea" /><path d="M5 6C10 13 14 14 18 14L27 7L22 16L24 18L20 20L15 26V20C11 18 7 13 5 6Z" fill="#fff" /></svg>} />
      <Tk u c={<div className="w-[30px] h-[32px] bg-black flex flex-col items-center justify-end relative"><svg className="absolute top-[1px]" width="22" height="20" viewBox="0 0 22 20"><path d="M11 1V7M11 13V19M1 10H7M15 10H21M4 3L8 7M18 3L14 7M4 17L8 13M18 17L14 13" stroke="#e8b84a" strokeWidth="1.800" /></svg><span className="text-[11px] leading-[12px] font-bold text-white font-['Liberation_Sans']">OS</span></div>} />
      <div className="ml-[389px] shrink-0"><svg width="30" height="32" viewBox="0 0 30 32"><circle cx="13" cy="15" r="13" fill="#3a9ee8" /><circle cx="13" cy="15" r="10" fill="#fff" /><text x="13" y="22" textAnchor="middle" fontSize="19" fontWeight="700" fill="#2a7ac8" fontFamily="Liberation Sans">?</text><circle cx="22" cy="24" r="6" fill="#e8b020" /></svg></div>
      <div className="ml-[78px] shrink-0"><svg width="32" height="32" viewBox="0 0 32 32"><circle cx="10" cy="9" r="6" fill="#c8d4e4" /><path d="M2 20A13 13 0 0 0 24 22L10 16Z" fill="#e8a040" /><circle cx="20" cy="24" r="6" fill="#c8d4e4" /><circle cx="23" cy="8" r="7" fill="#d83030" /><text x="23" y="12" textAnchor="middle" fontSize="11" fill="#fff" fontFamily="Liberation Sans">1</text></svg></div>
      <span className="ml-[8px] text-[19px] text-[#f0f0f0] whitespace-nowrap font-light">14°C 局部多云</span>
      <svg className="ml-[31px]" width="16" height="10" viewBox="0 0 16 10"><path d="M1 9L8 1L15 9" stroke="#eee" fill="none" /></svg>
      <svg className="ml-[14px]" width="14" height="14" viewBox="0 0 14 14"><rect width="14" height="14" rx="2" fill="#5a9a30" /><ellipse cx="7" cy="7" rx="5" ry="3" fill="none" stroke="#bfe090" /></svg>
      <svg className="ml-[16px]" width="16" height="16" viewBox="0 0 16 16" fill="none" stroke="#ddd"><path d="M2 15A13 13 0 0 1 15 2M6 15A9 9 0 0 1 15 6M10 15A5 5 0 0 1 15 10" /></svg>
      <svg className="ml-[11px]" width="20" height="14" viewBox="0 0 20 14"><rect x="3" y="2" width="16" height="11" fill="#eee" stroke="#eee" /><path d="M0 2H4M0 6H4" stroke="#eee" /></svg>
      <svg className="ml-[10px]" width="20" height="14" viewBox="0 0 20 14" fill="none" stroke="#ddd"><path d="M1 5H4L8 1V13L4 9H1ZM12 4L18 10M18 4L12 10" /></svg>
      <span className="ml-[11px] text-[19px] text-[#eee]">英</span>
      <span className="ml-[14px] w-[22px] h-[22px] rounded-[5px] bg-[#e8592a] flex items-center justify-center text-[17px] font-bold text-white font-['Liberation_Sans']">S</span>
      <div className="ml-[8px] flex-1 flex flex-col items-start text-[16px] leading-[25px] text-[#eee] whitespace-nowrap">
        <span className="ml-[26px]">0:13</span>
        <span>2023/10</span>
      </div>
    </div>
  </div>
);

export default function App() {
  return (
    <div className="relative w-[1728px] h-[1080px] overflow-hidden flex flex-col bg-white font-['Noto_Sans','Noto_Sans_CJK_SC',sans-serif]">
      <Top />
      <Ribbon />
      <Work />
      <Status />
      <Taskbar />
      <Otf />
      <LayoutWin />
      <Dialog />
      <div className="absolute left-[1562px] top-[943px] w-[60px] h-[60px] z-30 rounded-full border-[4px] border-[#d5ebfa] overflow-hidden flex items-center justify-center bg-linear-to-b from-[#3c97ea] to-[#58aef0]">
        <svg className="absolute left-0 bottom-0" width="52" height="20" viewBox="0 0 52 20"><path d="M0 8C12 0 36 0 52 8V20H0Z" fill="#9ad3f6" /></svg>
        <span className="relative text-[16px] text-[#dff0fc]">00:31</span>
      </div>
    </div>
  );
}
